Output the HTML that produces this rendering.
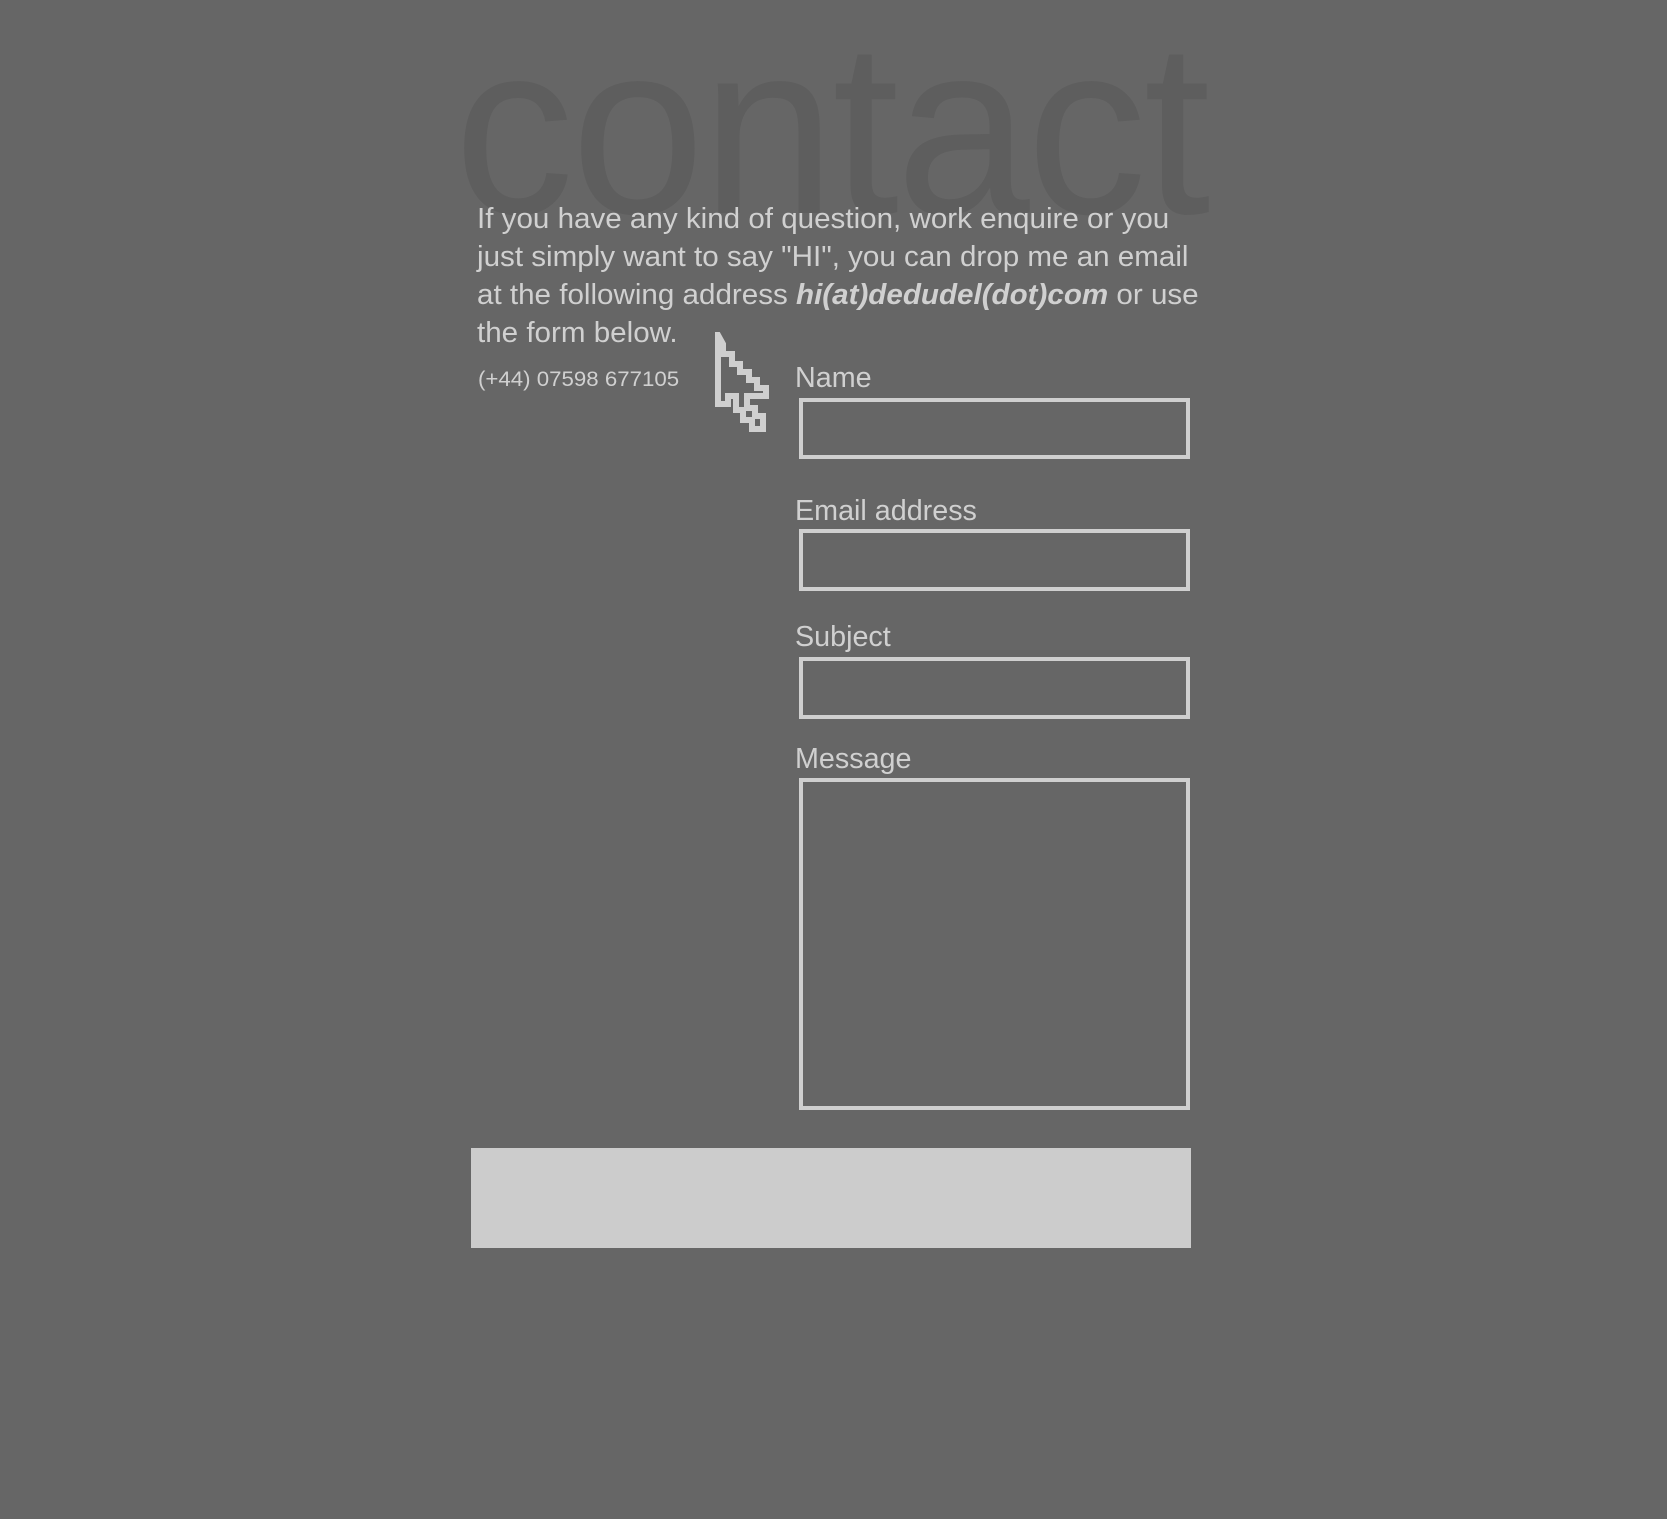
<!DOCTYPE html>
<html><head><meta charset="utf-8"><style>
html,body{margin:0;padding:0}
body{width:1667px;height:1519px;background:#666;position:relative;overflow:hidden;font-family:"Liberation Sans",sans-serif;color:#d0d0d0}
.a{position:absolute;white-space:nowrap;transform-origin:0 0}
.big{left:454px;font-size:245px;line-height:245px;color:#5e5e5e;transform:scaleX(0.98);letter-spacing:-3px}
.p{left:477px;font-size:29px;line-height:38px;transform:scaleX(1.02)}
.lab{font-size:29px;transform:scaleX(0.99)}
.box{position:absolute;border:4px solid #cfcfcf;box-sizing:border-box;left:799px;width:391px}
</style></head><body>
<div class="a big" style="top:6px">contact</div>
<div class="a p" style="top:200px">If you have any kind of question, work enquire or you</div>
<div class="a p" style="top:238px">just simply want to say "HI", you can drop me an email</div>
<div class="a p" style="top:276px">at the following address <b><i>hi(at)dedudel(dot)com</i></b> or use</div>
<div class="a p" style="top:314px">the form below.</div>
<div class="a" style="left:478px;top:368px;font-size:21px;transform:scaleX(1.06)">(+44) 07598 677105</div>
<svg class="a" style="left:712px;top:332px" width="60" height="100" viewBox="0 0 60 100">
<path d="M6 3 V72 H16 V64 H24 V78 H31 V88 H40 V97 H51 V84 H43 V76 H35 V64 H54 V56 H45 V48 H37 V40 H28 V32 H20 V22 H11 V12 Z" fill="none" stroke="#cfcfcf" stroke-width="6"/>
</svg>
<div class="a lab" style="left:795px;top:362px">Name</div>
<div class="box" style="top:398px;height:61px"></div>
<div class="a lab" style="left:795px;top:495px">Email address</div>
<div class="box" style="top:529px;height:62px"></div>
<div class="a lab" style="left:795px;top:621px">Subject</div>
<div class="box" style="top:657px;height:62px"></div>
<div class="a lab" style="left:795px;top:743px">Message</div>
<div class="box" style="top:778px;height:332px"></div>
<div style="position:absolute;left:471px;top:1148px;width:720px;height:100px;background:#ccc"></div>
</body></html>
